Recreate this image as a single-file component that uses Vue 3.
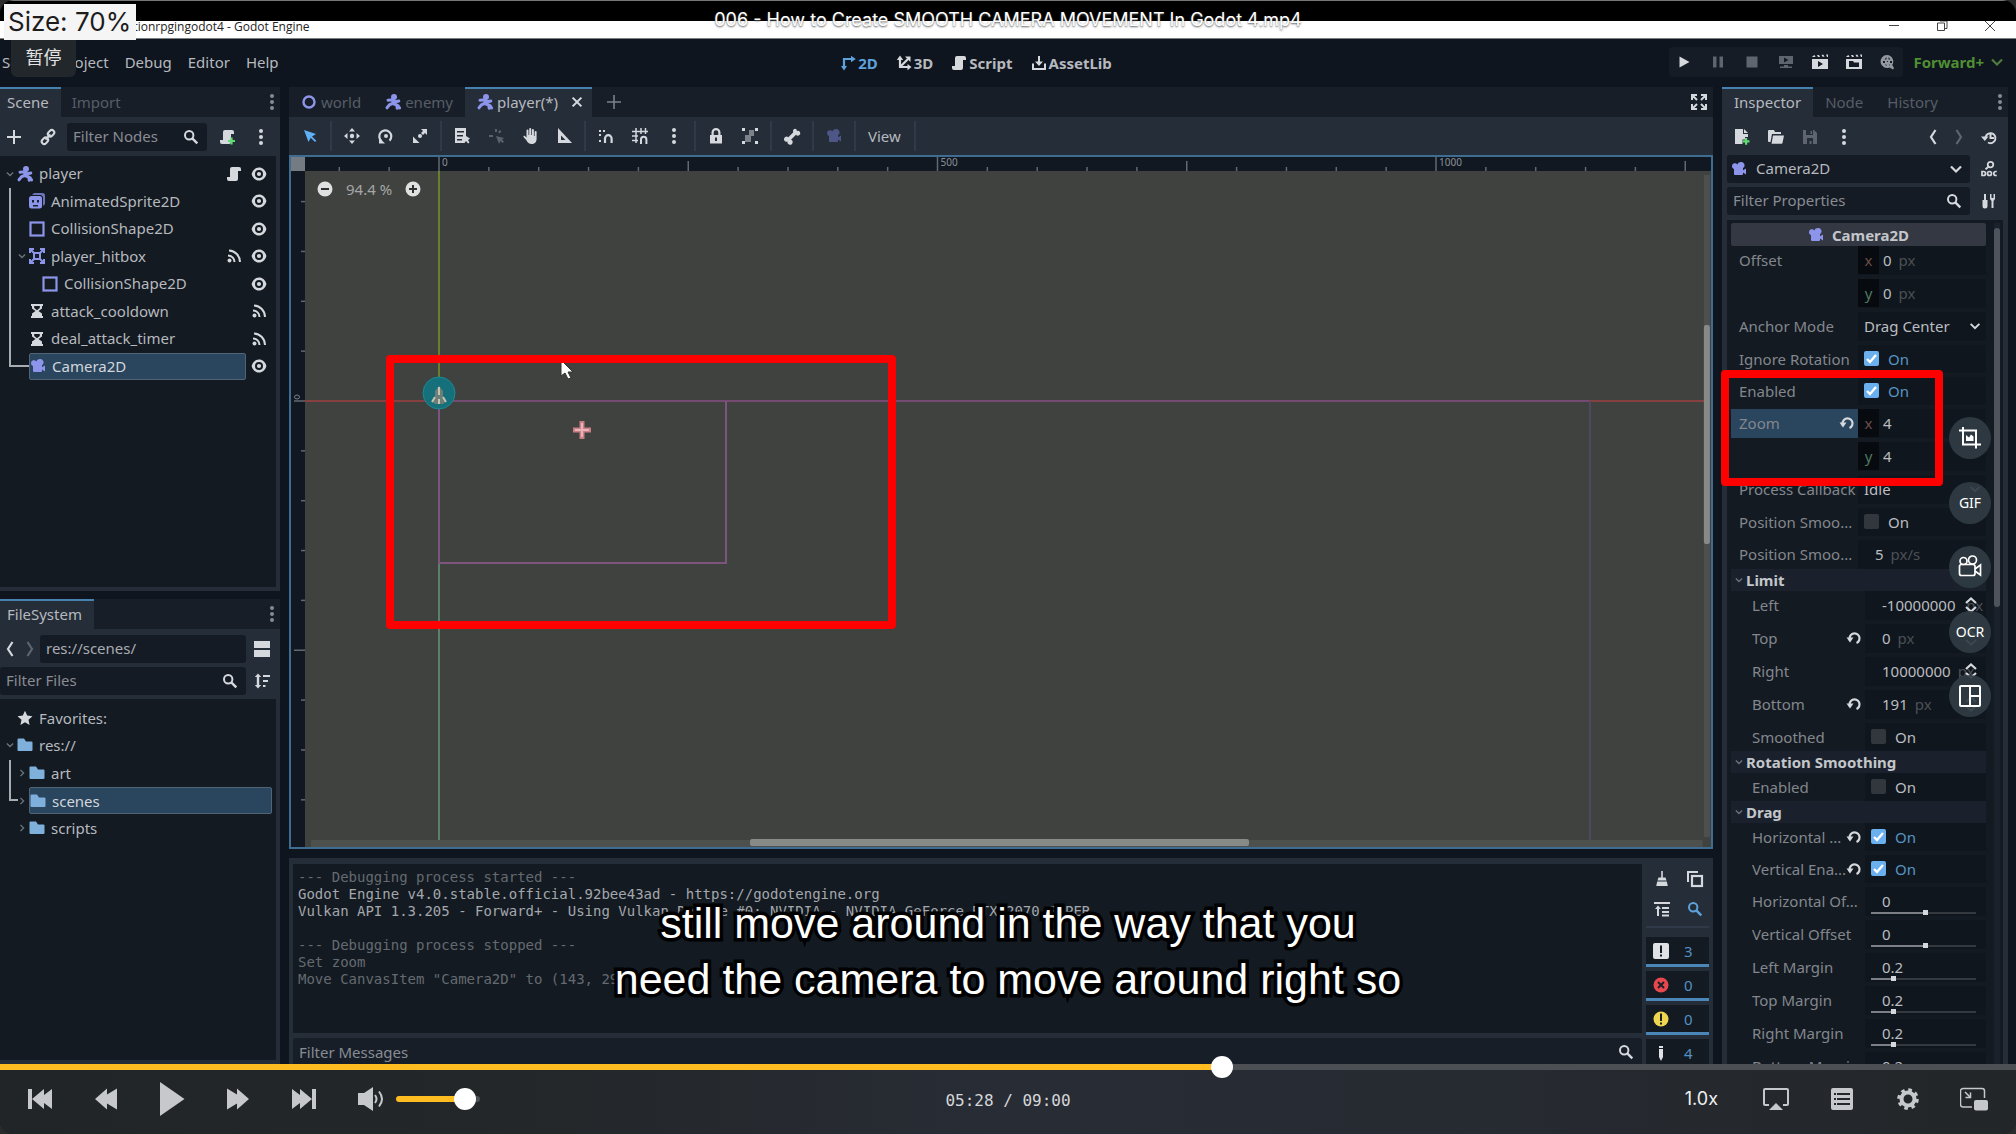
<script setup>
import { ref, computed } from 'vue'

const icons = {
  add: '<path d="M7 1h2v6h6v2H9v6H7V9H1V7h6z" fill="currentColor"/>',
  link: '<g fill="none" stroke="currentColor" stroke-width="2"><rect x="7.6" y="1.8" width="7" height="5" rx="2.5" transform="rotate(-45 11 4.3)"/><rect x="1.4" y="9.2" width="7" height="5" rx="2.5" transform="rotate(-45 5 11.7)"/><path d="M5.5 10.5l5-5"/></g>',
  search: '<circle cx="6.2" cy="6.2" r="4.2" fill="none" stroke="currentColor" stroke-width="2"/><path d="M9.3 9.3l5 5" stroke="currentColor" stroke-width="2.4"/>',
  script: '<path d="M6 1a2 2 0 0 0-2 2v8H1v2a2 2 0 0 0 2 2h7a2 2 0 0 0 2-2V5h3V3a2 2 0 0 0-2-2z" fill="currentColor"/>',
  scriptAdd: '<path d="M6 1a2 2 0 0 0-2 2v8H1v2a2 2 0 0 0 2 2h7a2 2 0 0 0 2-2V5h3V3a2 2 0 0 0-2-2z" fill="currentColor"/><path d="M11.4 8.5h2.2v2.4H16v2.2h-2.4v2.4h-2.2v-2.4H9v-2.2h2.4z" fill="#5fdc72"/>',
  dots: '<g fill="currentColor"><circle cx="8" cy="2" r="2"/><circle cx="8" cy="8" r="2"/><circle cx="8" cy="14" r="2"/></g>',
  down: '<path d="M3 5.5l5 5 5-5" fill="none" stroke="currentColor" stroke-width="2.2"/>',
  right: '<path d="M5.5 3l5 5-5 5" fill="none" stroke="currentColor" stroke-width="2.2"/>',
  back: '<path d="M10.5 1L6 8l4.5 7" fill="none" stroke="currentColor" stroke-width="2.2"/>',
  forward: '<path d="M5.5 1L10 8l-4.5 7" fill="none" stroke="currentColor" stroke-width="2.2"/>',
  body: '<g fill="none" stroke="#8d95ea" stroke-width="3" stroke-linecap="round"><path d="M8.6 5.5L7.5 9.5l-3 1.3-2.5 3M7.8 9.5l4 1.6.4 3.1M3 6.2l5-.4 2.4 2 3.4-.8M13 11.5l1.6 2.5"/></g><circle cx="9" cy="3" r="3" fill="#8d95ea"/>',
  sprite: '<path d="M5 0h8.5A2.5 2.5 0 0 1 16 2.500V11l-2 2V4L12 2H3z" fill="#6a74bd"/><rect x="0" y="3" width="13" height="12.500" rx="2.500" fill="#8d95ea"/><path d="M3 7h2v2.500H3zM8 7h2v2.500H8zM4 12h5v1.500H4z" fill="#18202c"/>',
  shape: '<rect x="1.500" y="1.500" width="13" height="13" fill="none" stroke="#8d95ea" stroke-width="2.200"/>',
  area: '<g fill="none" stroke="#8d95ea" stroke-width="2"><path d="M1 5V1h4M11 1h4v4M15 11v4h-4M5 15H1v-4"/><rect x="5" y="5" width="6" height="6"/><path d="M2 2l3 3M14 2l-3 3M2 14l3-3M14 14l-3-3"/></g>',
  timer: '<path d="M2 1v2h1v2.500L6.500 8 3 10.500V13H2v2h12v-2h-1v-2.500L9.500 8 13 5.500V3h1V1zm3.200 2h5.600v2L8 7.200 5.200 5z" fill="currentColor" fill-rule="evenodd"/>',
  camera: '<path d="M9.500 1a3.300 3.300 0 0 0-3.200 2.500A2.900 2.900 0 0 0 1 5.200c0 1.300.8 2.300 2 2.700V13a1 1 0 0 0 1 1h7a1 1 0 0 0 1-1v-1.500l3 2V7.500l-3 1.800V7A3.300 3.300 0 0 0 9.500 1z" fill="currentColor"/>',
  eye: '<path fill-rule="evenodd" d="M8 1.500C4.400 1.500 1.600 4 .6 8c1 4 3.800 6.500 7.400 6.500s6.400-2.500 7.400-6.500c-1-4-3.800-6.500-7.400-6.500zM8 4a4 4 0 1 1 0 8 4 4 0 0 1 0-8z" fill="currentColor"/><circle cx="8" cy="8" r="2.100" fill="currentColor"/>',
  signal: '<g fill="none" stroke="currentColor" stroke-width="2"><path d="M2 7.500A6.500 6.500 0 0 1 8.500 14M3 2.500A11.500 11.500 0 0 1 14 14"/></g><circle cx="3.500" cy="12.500" r="2" fill="currentColor"/>',
  folder: '<path d="M.5 2.500A1 1 0 0 1 1.500 1.500H7l2 3h5.500a1 1 0 0 1 1 1V13a1 1 0 0 1-1 1h-13a1 1 0 0 1-1-1z" fill="#7fb0db"/>',
  star: '<path d="M8 .8l2.200 4.800 5.300.6-4 3.500 1.100 5.200L8 12.300l-4.600 2.600 1.100-5.200-4-3.500 5.300-.6z" fill="currentColor"/>',
  split: '<path d="M0 0h16v7H0zM0 9h16v7H0z" fill="currentColor"/>',
  sort: '<path d="M4 .5L7.200 4H5.200v8h2L4 15.500.8 12h2V4h-2zM9 2h7v2H9zM9 7h5v2H9zM9 12h2.500v2H9z" fill="currentColor"/>',
  ring: '<circle cx="8" cy="8" r="5.500" fill="none" stroke="#8d95ea" stroke-width="2.400"/>',
  close: '<path d="M3 3l10 10M13 3L3 13" stroke="currentColor" stroke-width="2.400"/>',
  plusThin: '<path d="M8 1v14M1 8h14" stroke="currentColor" stroke-width="1.600"/>',
  expand: '<g fill="none" stroke="currentColor" stroke-width="2"><path d="M1 6V1h5M1 1l5 5M10 1h5v5M15 1l-5 5M1 10v5h5M1 15l5-5M15 10v5h-5M15 15l-5-5"/></g>',
  select: '<path d="M2 2l4.500 12 2.200-4.300L13 14l1.300-1.300L10 8.500 14 6z" fill="#5fb0f5"/>',
  move: '<path d="M8 0l3 3.500H5zM8 16l3-3.500H5zM0 8l3.500-3v6zM16 8l-3.500-3v6z" fill="currentColor"/><circle cx="8" cy="8" r="2.200" fill="currentColor"/>',
  rotate: '<path d="M3.500 13A6 6 0 1 1 11.500 12.600" fill="none" stroke="currentColor" stroke-width="2.200"/><path d="M1 9.500v6h6z" fill="currentColor"/><circle cx="8" cy="8" r="2" fill="currentColor"/>',
  scale: '<path d="M9 1h6v6l-2-2-2 2-2-2 2-2zM1 8.500v6.500h6.500L5.300 12.800 3.200 10.700z" fill="currentColor"/><circle cx="8" cy="8" r="2" fill="currentColor"/>',
  list: '<path fill-rule="evenodd" d="M1 0h11v8l4 2.500-2 1.500 1.500 2.500-1.500 1-2-2.500-1.500 2H1zm2 3v1.500h7V3zm0 4v1.500h6V7zm0 4v1.500h5V11z" fill="currentColor"/>',
  pivot: '<path d="M7 1h2v3H7zM1 7h4v2H1zM12 2l1.500 1.500-2 2L10 4zM8 8l3 8 1.500-3 2 2 1.500-1.500-2-2 2-1.500z" fill="currentColor"/>',
  hand: '<path d="M4.500 2.500a1 1 0 0 1 2 0V7h.7V1a1 1 0 0 1 2 0v6h.7V2a1 1 0 0 1 2 0v6h.7V4a1 1 0 0 1 2 0v7c0 3-2 5-5 5-2.500 0-4-1.500-5-3.500L1.500 9c-.3-1 .9-1.500 1.700-.8l1.300 1.300z" fill="currentColor"/>',
  measure: '<path fill-rule="evenodd" d="M2 0v15h14zm3 7.500l4.500 4.500H5z" fill="currentColor"/>',
  snap: '<path d="M1 2h2v2H1zM5 2h2v2H5zM1 6h2v2H1zM1 12h2v2H1z" fill="currentColor"/><path d="M7 15v-4.500a3.300 3.300 0 0 1 6.600 0V15" fill="none" stroke="currentColor" stroke-width="2.200"/>',
  grid: '<path d="M4 0v15M9 0v6M13.500 0v6M0 3.500h16M0 8h6M0 12.500h6" fill="none" stroke="currentColor" stroke-width="1.500"/><path d="M9 16v-4.500a2.700 2.700 0 0 1 5.400 0V16" fill="none" stroke="currentColor" stroke-width="2"/>',
  lock: '<path fill-rule="evenodd" d="M8 0a4.500 4.500 0 0 0-4.500 4.500V7H2v8.500h12V7h-1.500V4.500A4.500 4.500 0 0 0 8 0zm0 2.200a2.300 2.300 0 0 1 2.300 2.300V7H5.700V4.500A2.300 2.300 0 0 1 8 2.200zM7 9.500h2v3.500H7z" fill="currentColor"/>',
  group: '<path d="M0 0h3v3H0zM13 0h3v3h-3zM0 13h3v3H0zM13 13h3v3h-3z" fill="currentColor"/><path d="M7 2h5v6H9v6H3V7h4z" fill="currentColor" opacity=".5"/>',
  bone: '<path d="M10.800.8a2.300 2.300 0 0 0-1.500 3.500L4.300 9.300a2.600 2.600 0 1 0-.8 4.300A2.600 2.600 0 1 0 7 11.700l5-5A2.400 2.400 0 1 0 13 3 2.300 2.300 0 0 0 10.800.8z" fill="currentColor"/>',
  ws2d: '<path d="M4 14V4h8" fill="none" stroke="currentColor" stroke-width="2.200"/><path d="M1 11h6l-3 4.500zM11 .8L15.800 4 11 7.200z" fill="currentColor"/>',
  ws3d: '<path d="M4 3v9h9M4 12l8-8" fill="none" stroke="currentColor" stroke-width="2.200"/><path d="M.8 5L4 .5 7.200 5zM11.500 9l4 3-4 3.200zM9 1.500h5.500V7z" fill="currentColor"/>',
  asset: '<path d="M7 1h2v5.500h3L8 11 4 6.500h3zM1 8.500h2V13h10V8.500h2V15H1z" fill="currentColor"/>',
  play: '<path d="M3.500 2.500v11l10-5.500z" fill="currentColor"/>',
  pause: '<path d="M3 2.500h3.500v11H3zM9.500 2.500H13v11H9.500z" fill="currentColor"/>',
  stop: '<path d="M2.500 2.500h11v11h-11z" fill="currentColor"/>',
  remote: '<path fill-rule="evenodd" d="M1 2h14v8H1zm5 1.500v5L10.500 6zM6 11h4v1.500h4V14H2v-1.500h4z" fill="currentColor"/>',
  clip: '<path fill-rule="evenodd" d="M0 2.500L2.500 1l1 2H1zM5 1h2l1 2H6zM9.500.8h2l1 2h-2zM14 .5h2V3h-1zM0 5h16v10H0zm6 2v6l5-3z" fill="currentColor"/>',
  clipFolder: '<path fill-rule="evenodd" d="M0 2.500L2.500 1l1 2H1zM5 1h2l1 2H6zM9.500.8h2l1 2h-2zM14 .5h2V3h-1zM0 5h16v10H0zm3 3v5h10V8.500H8L7 7H3z" fill="currentColor"/>',
  movie: '<path fill-rule="evenodd" d="M7 1a6.500 6.500 0 1 0 2.500 12.500l3.500 2 1-1.500-1.800-3A6.500 6.500 0 0 0 7 1zM6.500 3v2.500h-2zm2 0l2 2.500h-2zM3 7h2v2H3zm4 0h1v1H7zm3 0h2v2h-2zM5 10.500h1.500V12zm4 0h1V12z" fill="currentColor"/>',
  fileNew: '<path d="M1 0h8v5h5v3h-3v2.500H8.500V15H1zM10 0l4 4h-4z" fill="currentColor"/><path d="M11 9h2.200v2.300h2.300v2.200h-2.300v2.300H11v-2.300H8.700v-2.200H11z" fill="#5fdc72"/>',
  open: '<path d="M1 1h5l1 2h6v2H4L2.500 13H1a1 1 0 0 1-1-1V2a1 1 0 0 1 1-1zM5 6.500h11L14.500 14a1 1 0 0 1-1 .8h-10z" fill="currentColor"/>',
  save: '<path fill-rule="evenodd" d="M1 1h11l3 3v11H1zm3 0v5h7V1zm1 8v6h2.500v-3h2v3H11V9zM8.500 2H10v3H8.500z" fill="currentColor"/>',
  history: '<path d="M4.500 9.500A5 5 0 1 1 7 13.500M9.500 5v4h3.500" fill="none" stroke="currentColor" stroke-width="2"/><path d="M0 7.500h7.500L3.800 12z" fill="currentColor"/>',
  docs: '<circle cx="9.500" cy="3.600" r="2.800" fill="none" stroke="currentColor" stroke-width="1.800"/><path d="M7.500 5.800L4.500 8.300" stroke="currentColor" stroke-width="2"/><g fill="none" stroke="currentColor" stroke-width="1.700"><path d="M1 10.500h1.500a2 2 0 0 1 0 4H1zM15.800 10.500h-1a2 2 0 0 0 0 4h1"/><circle cx="8.500" cy="12.500" r="2"/></g>',
  tools: '<path d="M3 1h2v6h1.500v6a2.500 2.500 0 0 1-5 0V7H3zM9 1h1.500v4h2V1H14v5l-1.500 2v7h-2V8L9 6z" fill="currentColor"/>',
  revert: '<path d="M4 10.500A5 5 0 1 1 10.500 13" fill="none" stroke="currentColor" stroke-width="2.200"/><path d="M.5 7.500h7L4 12.500z" fill="currentColor"/>',
  updown: '<path d="M3 6l5-4.500L13 6M3 10l5 4.500L13 10" fill="none" stroke="currentColor" stroke-width="2.200"/>',
  broom: '<path d="M7.200 0h1.600v6.500h2.700l1 3h-9l1-3h2.700zM3.200 10.500h9.600l1 4.500H2.200z" fill="currentColor"/>',
  copy: '<path d="M1 11V1h10" fill="none" stroke="currentColor" stroke-width="2"/><rect x="5" y="5" width="10" height="10" fill="none" stroke="currentColor" stroke-width="2.200"/>',
  collapse: '<path d="M0 1h16v2H0zM8 6h7v2H8zM8 10h7v2H8zM8 13.500h7v2H8zM4 4.500L7 8H5v7H3V8H1z" fill="currentColor"/>',
  msg: '<path fill-rule="evenodd" d="M2 0h12a2 2 0 0 1 2 2v12a2 2 0 0 1-2 2H2a2 2 0 0 1-2-2V2a2 2 0 0 1 2-2zm5 2.500v7.500h2V2.500zM7 11.500v2h2v-2z" fill="#dfe1e4"/>',
  err: '<circle cx="8" cy="8" r="7.500" fill="#e8484d"/><path d="M5 5l6 6M11 5l-6 6" stroke="#1a1f28" stroke-width="2"/>',
  warn: '<circle cx="8" cy="8" r="7.500" fill="#f0d54f"/><path d="M7 2.500h2V10H7zM7 11.500h2v2H7z" fill="#1a1f28"/>',
  edit: '<path d="M6 1h4v2H6zM6 4h4v8l-2 4-2-4z" fill="#dfe1e4"/>',
}

const mainMenu = ['Scene', 'Project', 'Debug', 'Editor', 'Help']
const workspaces = [
  { name: '2D', icon: 'ws2d', on: true },
  { name: '3D', icon: 'ws3d' },
  { name: 'Script', icon: 'script' },
  { name: 'AssetLib', icon: 'asset' },
]
const runTools = [
  { icon: 'play', name: 'Play' }, { icon: 'pause', name: 'Pause', dim: true }, { icon: 'stop', name: 'Stop', dim: true },
  { icon: 'remote', name: 'Remote', dim: true }, { icon: 'clip', name: 'Play scene' },
  { icon: 'clipFolder', name: 'Play custom scene' }, { icon: 'movie', name: 'Movie maker', mid: true },
]
const nodes = [
  { name: 'player', icon: 'body', depth: 0, open: true, extra: 'script', end: 'eye' },
  { name: 'AnimatedSprite2D', icon: 'sprite', depth: 1, end: 'eye' },
  { name: 'CollisionShape2D', icon: 'shape', depth: 1, end: 'eye' },
  { name: 'player_hitbox', icon: 'area', depth: 1, open: true, extra: 'signal', end: 'eye' },
  { name: 'CollisionShape2D', icon: 'shape', depth: 2, end: 'eye' },
  { name: 'attack_cooldown', icon: 'timer', depth: 1, end: 'signal' },
  { name: 'deal_attack_timer', icon: 'timer', depth: 1, end: 'signal' },
  { name: 'Camera2D', icon: 'camera', depth: 1, end: 'eye', on: true },
]
const files = [
  { name: 'Favorites:', icon: 'star', depth: 0 },
  { name: 'res://', icon: 'folder', depth: 0, arrow: 'down' },
  { name: 'art', icon: 'folder', depth: 1, arrow: 'right' },
  { name: 'scenes', icon: 'folder', depth: 1, arrow: 'right', on: true },
  { name: 'scripts', icon: 'folder', depth: 1, arrow: 'right' },
]
const canvasTools = [
  ['select'], ['move', 'rotate', 'scale'], ['list', 'pivot', 'hand', 'measure'],
  ['snap', 'grid', 'dots'], ['lock', 'group'], ['bone'], ['camera'],
]
const log = [
  { text: '--- Debugging process started ---', cls: 'faint' },
  { text: 'Godot Engine v4.0.stable.official.92bee43ad - https://godotengine.org', cls: 'bright' },
  { text: 'Vulkan API 1.3.205 - Forward+ - Using Vulkan Device #0: NVIDIA - NVIDIA GeForce RTX 2070 SUPER', cls: 'bright' },
  { text: '\u00a0', cls: 'faint' },
  { text: '--- Debugging process stopped ---', cls: 'faint' },
  { text: 'Set zoom', cls: 'faint' },
  { text: 'Move CanvasItem "Camera2D" to (143, 29)', cls: 'faint' },
]
const counters = [
  { icon: 'msg', n: 3 }, { icon: 'err', n: 0 }, { icon: 'warn', n: 0 }, { icon: 'edit', n: 4 },
]
const sections = [
  { rows: [
    { label: 'Offset', kind: 'vec', axis: 'x', value: '0', unit: 'px' },
    { label: '', kind: 'vec', axis: 'y', value: '0', unit: 'px' },
    { label: 'Anchor Mode', kind: 'select', value: 'Drag Center' },
    { label: 'Ignore Rotation', kind: 'check', value: true },
    { label: 'Enabled', kind: 'check', value: true },
    { label: 'Zoom', kind: 'vec', axis: 'x', value: '4', revert: true, on: true },
    { label: '', kind: 'vec', axis: 'y', value: '4' },
    { label: 'Process Callback', kind: 'select', value: 'Idle' },
    { label: 'Position Smoo...', kind: 'check', value: false },
    { label: 'Position Smoo...', kind: 'num', value: '5', unit: 'px/s' },
  ] },
  { title: 'Limit', rows: [
    { label: 'Left', kind: 'num', value: '-10000000', unit: 'px', spin: true },
    { label: 'Top', kind: 'num', value: '0', unit: 'px', spin: true, revert: true },
    { label: 'Right', kind: 'num', value: '10000000', unit: 'px', spin: true },
    { label: 'Bottom', kind: 'num', value: '191', unit: 'px', spin: true, revert: true },
    { label: 'Smoothed', kind: 'check', value: false },
  ] },
  { title: 'Rotation Smoothing', rows: [{ label: 'Enabled', kind: 'check', value: false }] },
  { title: 'Drag', rows: [
    { label: 'Horizontal ...', kind: 'check', value: true, revert: true },
    { label: 'Vertical Ena...', kind: 'check', value: true, revert: true },
    { label: 'Horizontal Of...', kind: 'slide', value: '0', pos: 52 },
    { label: 'Vertical Offset', kind: 'slide', value: '0', pos: 52 },
    { label: 'Left Margin', kind: 'slide', value: '0.2', pos: 20 },
    { label: 'Top Margin', kind: 'slide', value: '0.2', pos: 20 },
    { label: 'Right Margin', kind: 'slide', value: '0.2', pos: 20 },
    { label: 'Bottom Margin', kind: 'slide', value: '0.2', pos: 20 },
  ] },
]

const STEP = 49.85
const xTicks = Array.from({ length: 28 }, (_, k) => k - 2).map(i => ({
  at: i * STEP, len: i % 10 === 0 ? 14 : i % 5 === 0 ? 10 : 4, label: i % 10 === 0 ? String(i * 50) : '',
}))
const yTicks = Array.from({ length: 13 }, (_, k) => k - 4).map(i => ({ at: i * STEP, len: i % 5 === 0 ? 11 : 4 }))

const time = ref(328)
const volume = ref(94)
const played = computed(() => (time.value / 540) * 100)
</script>

<template>
  <main class="player">
    <section class="stage">
      <div class="letterbox"></div>
      <header class="titlebar">
        <span class="wintitle">actionrpgingodot4 - Godot Engine</span>
        <span class="wincontrols">
          <svg viewBox="0 0 12 12"><path d="M1 4.500h10" /></svg>
          <svg viewBox="0 0 12 12"><path d="M1.500 2h7v7.500h-7zM4 0h7v7.500H8.500" /></svg>
          <svg viewBox="0 0 12 12"><path d="M1 0l10 10M11 0L1 10" /></svg>
        </span>
      </header>

      <div class="editor">
        <nav class="menubar">
          <div class="menus"><button v-for="m in mainMenu" :key="m">{{ m }}</button></div>
          <div class="spaces">
            <button v-for="w in workspaces" :key="w.name" :class="{ on: w.on }">
              <svg class="ic" viewBox="0 0 16 16" v-html="icons[w.icon]"></svg>{{ w.name }}
            </button>
          </div>
          <div class="run">
            <div class="runbox">
              <button v-for="r in runTools" :key="r.name" :class="{ dim: r.dim, mid: r.mid }" :aria-label="r.name">
                <svg class="ic" viewBox="0 0 16 16" v-html="icons[r.icon]"></svg>
              </button>
            </div>
            <button class="renderer">Forward+ <svg class="ic" viewBox="0 0 16 16" v-html="icons.down"></svg></button>
          </div>
        </nav>

        <div class="docks">
          <aside class="left">
            <section class="dock scene">
              <div class="tabs">
                <button class="tab on">Scene</button><button class="tab">Import</button>
                <button class="more" aria-label="Dock options"><svg class="ic" viewBox="0 0 16 16" v-html="icons.dots"></svg></button>
              </div>
              <div class="bar scenebar">
                <button aria-label="Add node"><svg class="ic" viewBox="0 0 16 16" v-html="icons.add"></svg></button>
                <button aria-label="Instance scene"><svg class="ic" viewBox="0 0 16 16" v-html="icons.link"></svg></button>
                <label class="field"><input placeholder="Filter Nodes" aria-label="Filter Nodes"><svg class="ic" viewBox="0 0 16 16" v-html="icons.search"></svg></label>
                <button aria-label="Attach script"><svg class="ic" viewBox="0 0 16 16" v-html="icons.scriptAdd"></svg></button>
                <button aria-label="More"><svg class="ic" viewBox="0 0 16 16" v-html="icons.dots"></svg></button>
              </div>
              <div class="inner">
                <ul class="tree nodes">
                  <li v-for="(n, i) in nodes" :key="i">
                    <span class="item" :class="['d' + n.depth, { on: n.on }]">
                      <svg class="arrow" viewBox="0 0 16 16" v-html="n.open ? icons.down : ''"></svg>
                      <svg class="ic" :class="{ cam: n.icon === 'camera' }" viewBox="0 0 16 16" v-html="icons[n.icon]"></svg>
                      <span class="name">{{ n.name }}</span>
                      <svg v-if="n.extra" class="ic" viewBox="0 0 16 16" v-html="icons[n.extra]"></svg>
                    </span>
                    <svg class="ic end" viewBox="0 0 16 16" v-html="icons[n.end]"></svg>
                  </li>
                </ul>
              </div>
            </section>

            <section class="dock files">
              <div class="tabs">
                <button class="tab on">FileSystem</button>
                <button class="more" aria-label="Dock options"><svg class="ic" viewBox="0 0 16 16" v-html="icons.dots"></svg></button>
              </div>
              <div class="filebars">
                <div class="bar pathbar">
                  <button aria-label="Back"><svg class="ic" viewBox="0 0 16 16" v-html="icons.back"></svg></button>
                  <button class="dim" aria-label="Forward"><svg class="ic" viewBox="0 0 16 16" v-html="icons.forward"></svg></button>
                  <label class="field"><input class="solid" value="res://scenes/" aria-label="Path"></label>
                  <button class="side" aria-label="Split mode"><svg class="ic" viewBox="0 0 16 16" v-html="icons.split"></svg></button>
                </div>
                <div class="bar pathbar">
                  <label class="field flush"><input placeholder="Filter Files" aria-label="Filter Files"><svg class="ic" viewBox="0 0 16 16" v-html="icons.search"></svg></label>
                  <button class="side" aria-label="Sort"><svg class="ic" viewBox="0 0 16 16" v-html="icons.sort"></svg></button>
                </div>
              </div>
              <div class="inner">
                <ul class="tree paths">
                  <li v-for="f in files" :key="f.name">
                    <span class="item" :class="['d' + f.depth, { on: f.on }]">
                      <svg class="arrow" viewBox="0 0 16 16" v-html="f.arrow ? icons[f.arrow] : ''"></svg>
                      <svg class="ic" viewBox="0 0 16 16" v-html="icons[f.icon]"></svg>
                      <span class="name">{{ f.name }}</span>
                    </span>
                  </li>
                </ul>
              </div>
            </section>
          </aside>

          <section class="center">
            <div class="tabs">
              <button class="tab file"><svg class="ic" viewBox="0 0 16 16" v-html="icons.ring"></svg>world</button>
              <button class="tab file"><svg class="ic" viewBox="0 0 16 16" v-html="icons.body"></svg>enemy</button>
              <button class="tab file on"><svg class="ic" viewBox="0 0 16 16" v-html="icons.body"></svg>player(*)<svg class="ic x" viewBox="0 0 16 16" v-html="icons.close"></svg></button>
              <button class="newtab" aria-label="New scene"><svg class="ic" viewBox="0 0 16 16" v-html="icons.plusThin"></svg></button>
              <button class="more wide" aria-label="Distraction free"><svg class="ic" viewBox="0 0 16 16" v-html="icons.expand"></svg></button>
            </div>
            <div class="bar canvasbar">
              <template v-for="(g, gi) in canvasTools" :key="gi">
                <button v-for="t in g" :key="t" :class="t" :aria-label="t"><svg class="ic" viewBox="0 0 16 16" v-html="icons[t]"></svg></button>
                <i class="sep"></i>
              </template>
              <button class="view">View</button><i class="sep"></i>
            </div>
            <div class="viewport">
              <svg class="canvas">
                <rect x="14" y="14" width="100%" height="100%" fill="#3f423e" />
                <g transform="translate(148 244)">
                  <path d="M0-244V10" stroke="#697f2e" stroke-width="2" />
                  <path d="M0 10V460" stroke="#5c8068" stroke-width="2" />
                  <path d="M-134 0H0M1151 0H1268" stroke="#85403f" stroke-width="2" />
                  <path d="M0 0H1151" stroke="#744a72" stroke-width="2" />
                  <path d="M1151 0V460" stroke="#504862" stroke-width="2" />
                  <path d="M0 0V162H287V0" fill="none" stroke="#7d547d" stroke-width="2" />
                  <circle cy="-8" r="16" fill="#16707b" stroke="#198b96" stroke-width="1" />
                  <path d="M0-15l4 5v6l3 4-3 3H-4l-3-3 3-4v-6z" fill="#6b7f78" />
                  <path d="M0-14v8M-4-4l-3 5M4-4l3 5M0-2v5" stroke="#c3c4b2" stroke-width="2" />
                  <path d="M143 20v18M134 29h18" stroke="#c97f88" stroke-width="5" />
                  <path d="M143 22v14M136 29h14" stroke="#eab3b6" stroke-width="2" />
                  <path d="M122-41v16l4-3 3 6 3-1-3-6h5z" fill="#fff" stroke="#333" stroke-width="1" />
                </g>
                <rect width="100%" height="14" fill="#111822" />
                <rect width="14" height="100%" fill="#111822" />
                <rect width="14" height="14" fill="#757b82" />
                <g stroke="#636870" stroke-width="1.500">
                  <path v-for="t in xTicks" :key="'x' + t.at" :d="`M${148 + t.at} 14v${-t.len}`" />
                  <path v-for="t in yTicks" :key="'y' + t.at" :d="`M14 ${244 + t.at}h${-t.len}`" />
                </g>
                <g fill="#8b9097" font-size="10">
                  <text v-for="t in xTicks" :key="'l' + t.at" :x="151 + t.at" y="9">{{ t.label }}</text>
                </g>
                <ellipse cx="6" cy="240" rx="2.500" ry="2" fill="none" stroke="#7b8087" />
                <rect x="20" y="683" width="98%" height="7" fill="#4d504c" />
                <rect x="459" y="682" width="499" height="7" rx="2" fill="#878a86" />
                <rect x="99.5%" y="18" width="6" height="662" fill="#4d504c" />
                <rect x="99.5%" y="168" width="6" height="219" rx="2" fill="#878a86" />
              </svg>
              <div class="zoomer">
                <button aria-label="Zoom out"><svg viewBox="0 0 16 16"><circle cx="8" cy="8" r="7.500" fill="#dfe0e0" /><path d="M4 8h8" stroke="#2e312f" stroke-width="2" /></svg></button>
                <span>94.4 %</span>
                <button aria-label="Zoom in"><svg viewBox="0 0 16 16"><circle cx="8" cy="8" r="7.500" fill="#dfe0e0" /><path d="M4 8h8M8 4v8" stroke="#2e312f" stroke-width="2" /></svg></button>
              </div>
            </div>
            <div class="output">
              <div class="logcol">
                <div class="log"><p v-for="(l, i) in log" :key="i" :class="l.cls">{{ l.text }}</p></div>
                <label class="field msgs"><input placeholder="Filter Messages" aria-label="Filter Messages"><svg class="ic" viewBox="0 0 16 16" v-html="icons.search"></svg></label>
              </div>
              <div class="logtools">
                <div class="quad">
                  <button v-for="t in ['broom', 'copy', 'collapse', 'search']" :key="t" :class="t" :aria-label="t"><svg class="ic" viewBox="0 0 16 16" v-html="icons[t]"></svg></button>
                </div>
                <button v-for="c in counters" :key="c.icon" class="counter"><svg class="ic" viewBox="0 0 16 16" v-html="icons[c.icon]"></svg>{{ c.n }}</button>
              </div>
            </div>
          </section>

          <aside class="dock inspector">
            <div class="tabs">
              <button class="tab on">Inspector</button><button class="tab">Node</button><button class="tab">History</button>
              <button class="more" aria-label="Dock options"><svg class="ic" viewBox="0 0 16 16" v-html="icons.dots"></svg></button>
            </div>
            <div class="bar inspbar">
              <button aria-label="New"><svg class="ic" viewBox="0 0 16 16" v-html="icons.fileNew"></svg></button>
              <button aria-label="Open"><svg class="ic" viewBox="0 0 16 16" v-html="icons.open"></svg></button>
              <button class="dim" aria-label="Save"><svg class="ic" viewBox="0 0 16 16" v-html="icons.save"></svg></button>
              <button aria-label="More"><svg class="ic" viewBox="0 0 16 16" v-html="icons.dots"></svg></button>
              <span class="grow"></span>
              <button class="slim" aria-label="Previous"><svg class="ic" viewBox="0 0 16 16" v-html="icons.back"></svg></button>
              <button class="slim dim" aria-label="Next"><svg class="ic" viewBox="0 0 16 16" v-html="icons.forward"></svg></button>
              <button aria-label="History"><svg class="ic" viewBox="0 0 16 16" v-html="icons.history"></svg></button>
            </div>
            <div class="picks">
              <label class="field object"><svg class="ic cam" viewBox="0 0 16 16" v-html="icons.camera"></svg><select aria-label="Object"><option>Camera2D</option></select><svg class="ic" viewBox="0 0 16 16" v-html="icons.down"></svg></label>
              <button aria-label="Open docs"><svg class="ic" viewBox="0 0 16 16" v-html="icons.docs"></svg></button>
              <label class="field"><input placeholder="Filter Properties" aria-label="Filter Properties"><svg class="ic" viewBox="0 0 16 16" v-html="icons.search"></svg></label>
              <button aria-label="Property tools"><svg class="ic" viewBox="0 0 16 16" v-html="icons.tools"></svg></button>
            </div>
            <div class="props">
              <div class="proplist">
                <h2 class="category"><svg class="ic cam" viewBox="0 0 16 16" v-html="icons.camera"></svg>Camera2D</h2>
                <template v-for="(s, si) in sections" :key="si">
                  <h3 v-if="s.title"><svg class="arrow" viewBox="0 0 16 16" v-html="icons.down"></svg>{{ s.title }}</h3>
                  <div class="rows" :class="{ nested: s.title }">
                    <div v-for="(r, ri) in s.rows" :key="ri" class="prop" :class="[r.kind, { on: r.on }]">
                      <label class="plabel" :for="`p${si}-${ri}`"><span>{{ r.label }}</span><svg v-if="r.revert" class="ic" viewBox="0 0 16 16" v-html="icons.revert"></svg></label>
                      <div class="pfield">
                        <template v-if="r.kind === 'check'">
                          <input :id="`p${si}-${ri}`" type="checkbox" :checked="r.value"><span class="state">On</span>
                        </template>
                        <template v-else-if="r.kind === 'select'">
                          <select :id="`p${si}-${ri}`"><option>{{ r.value }}</option></select><svg class="ic chev" viewBox="0 0 16 16" v-html="icons.down"></svg>
                        </template>
                        <template v-else>
                          <b v-if="r.axis" :class="r.axis">{{ r.axis }}</b>
                          <input :id="`p${si}-${ri}`" class="val" :value="r.value" :style="{ width: r.value.length + 'ch' }">
                          <span v-if="r.unit" class="unit">{{ r.unit }}</span>
                          <svg v-if="r.spin" class="ic spin" viewBox="0 0 16 16" v-html="icons.updown"></svg>
                          <input v-if="r.kind === 'slide'" class="slider" type="range" :value="r.pos" :aria-label="r.label" :style="{ '--p': r.pos + '%' }">
                        </template>
                      </div>
                    </div>
                  </div>
                </template>
              </div>
              <div class="scroll"><i></i></div>
            </div>
          </aside>
        </div>
      </div>

      <h1 class="videotitle">006 - How to Create SMOOTH CAMERA MOVEMENT In Godot 4.mp4</h1>
      <div class="mark canvasmark"></div>
      <div class="mark zoommark"></div>
      <div class="sizebadge">Size: 70%</div>
      <div class="tip">暂停</div>
      <div class="shots">
        <button aria-label="Screenshot"><svg viewBox="0 0 24 24" fill="none" stroke="#fff" stroke-width="2"><path d="M1 4.500h17v18M5 1v17.500h18" /><path d="M8 15V9l3 2.500L13 8.500l2.500 2V15z" fill="#fff" stroke="none" /></svg></button>
        <button>GIF</button>
        <button aria-label="Record"><svg viewBox="0 0 24 24" fill="none" stroke="#fff" stroke-width="1.700"><circle cx="5.500" cy="6" r="3.500" /><circle cx="14.500" cy="5" r="4" /><rect x="1.500" y="9.500" width="15.500" height="11" rx="2" /><path d="M17 14l5.500-4v10L17 16" /></svg></button>
        <button>OCR</button>
        <button aria-label="Layout"><svg viewBox="0 0 24 24" fill="none" stroke="#fff" stroke-width="2"><rect x="2" y="2" width="20" height="20" rx="1" /><path d="M12 2v20M12 12h10" /></svg></button>
      </div>
      <p class="subtitle">still move around in the way that you<br>need the camera to move around right so</p>
    </section>

    <footer class="controls">
      <input class="seek" type="range" min="0" max="540" v-model="time" aria-label="Seek" :style="{ '--p': played + '%' }">
      <div class="row">
        <div class="transport">
          <button aria-label="Previous"><svg viewBox="0 0 26 34"><path d="M1 7h4v20H1zM5 17L17 7v6l8-6v20l-8-6v6z" /></svg></button>
          <button aria-label="Rewind"><svg viewBox="0 0 26 34"><path d="M2 17L14 6.500v6l10-6v21l-10-6v6z" /></svg></button>
          <button aria-label="Play"><svg viewBox="0 0 26 34"><path d="M1 0l24.500 17L1 34z" /></svg></button>
          <button aria-label="Fast forward"><svg viewBox="0 0 26 34"><path d="M24 17L12 6.500v6l-10-6v21l10-6v6z" /></svg></button>
          <button aria-label="Next"><svg viewBox="0 0 26 34"><path d="M25 7h-4v20h4zM21 17L9 7v6L1 7v20l8-6v6z" /></svg></button>
        </div>
        <button class="mute" aria-label="Mute"><svg viewBox="0 0 26 26"><path d="M0 7h6l9-6v24l-9-6H0z" /><path d="M17 9q3 4 0 8M21 5.500q6 7.500 0 15" fill="none" stroke="#c6c8cc" stroke-width="2" /></svg></button>
        <input class="volume" type="range" min="0" max="100" v-model="volume" aria-label="Volume">
        <div class="time">05:28 / 09:00</div>
        <div class="extras">
          <button class="rate">1.0x</button>
          <button aria-label="AirPlay"><svg viewBox="0 0 28 24"><path d="M7 18H3a1 1 0 0 1-1-1V3a1 1 0 0 1 1-1h22a1 1 0 0 1 1 1v14a1 1 0 0 1-1 1h-4" fill="none" stroke="#c6c8cc" stroke-width="2" /><path d="M14 16l7 7H7z" /></svg></button>
          <button aria-label="Playlist"><svg viewBox="0 0 28 24"><path fill-rule="evenodd" d="M5 1h18a2 2 0 0 1 2 2v18a2 2 0 0 1-2 2H5a2 2 0 0 1-2-2V3a2 2 0 0 1 2-2zm1 5v2h2V6zm3 0v2h13V6zm-3 5v2h2v-2zm3 0v2h13v-2zm-3 5v2h2v-2zm3 0v2h13v-2z" /></svg></button>
          <button aria-label="Settings"><svg viewBox="0 0 28 24"><circle cx="14" cy="12" r="6.500" fill="none" stroke="#c6c8cc" stroke-width="4" /><circle cx="14" cy="12" r="9.300" fill="none" stroke="#c6c8cc" stroke-width="3" stroke-dasharray="3.650 3.650" /></svg></button>
          <button aria-label="Picture in picture"><svg viewBox="0 0 28 24"><path d="M12 20H3a2.500 2.500 0 0 1-2.500-2.500V4A2.500 2.500 0 0 1 3 1.500h19A2.500 2.500 0 0 1 24.500 4v7M5 5l5 5M10.500 5.500v5h-5" fill="none" stroke="#c6c8cc" stroke-width="1.500" /><rect x="14" y="13" width="14" height="10.500" rx="2" /></svg></button>
        </div>
      </div>
    </footer>
  </main>
</template>

<style>
body { margin: 0; background: #2b2b2c; }
</style>

<style scoped>
* { box-sizing: border-box; }
.player { height: 100vh; display: flex; flex-direction: column; border-radius: 14px; overflow: hidden; font: 15px/20px "Noto Sans", sans-serif; color: #b6b9be; background: #0f151e; }
button { font: inherit; color: inherit; background: none; border: 0; padding: 0; margin: 0; display: flex; align-items: center; justify-content: center; }
input, select { font: inherit; color: inherit; background: none; border: 0; padding: 0; margin: 0; min-width: 0; outline: 0; appearance: none; }
h1, h2, h3, p, ul { margin: 0; padding: 0; list-style: none; font-size: inherit; }
.ic { width: 16px; height: 16px; flex: none; display: block; color: #d5d8dc; overflow: visible; }
.cam { color: #8d95ea; }
.arrow { width: 10px; height: 10px; flex: none; color: #6c727b; }
.dim .ic { color: #5f656e; }
.stage { position: relative; flex: 1; min-height: 0; overflow: hidden; display: flex; flex-direction: column; }
.letterbox { height: 21px; flex: none; background: #000; border-top: 1px solid #777; }
.titlebar { height: 18px; flex: none; background: #fff; border-bottom: 1px solid #7e8280; display: flex; justify-content: space-between; padding: 0 20px 0 121px; font: 12px/12px "Open Sans", sans-serif; color: #222; }
.wincontrols { display: flex; gap: 36px; }
.wincontrols svg { width: 12px; height: 12px; fill: none; stroke: #444; stroke-width: 1; }
.editor { flex: 1; min-height: 0; display: flex; flex-direction: column; }
.menubar { height: 48px; flex: none; display: grid; grid-template-columns: 1fr auto 1fr; align-items: center; }
.menus { display: flex; gap: 16px; padding: 0 0 2px 2px; }
.spaces { display: flex; gap: 18px; font-weight: 700; padding-right: 64px; }
.spaces button { gap: 2px; }
.spaces .on, .spaces .on .ic { color: #5da2dc; }
.run { display: flex; justify-content: flex-end; align-items: center; padding: 0 11px 2px 0; gap: 10px; }
.runbox { display: flex; gap: 4px; background: #151c26; height: 30px; border-radius: 4px; }
.runbox button { width: 30px; }
.mid .ic { color: #9499a0; }
.renderer { color: #4f8f33; font-weight: 700; gap: 5px; }
.renderer .ic { color: #4f7a40; }

.docks { flex: 1; min-height: 0; display: flex; gap: 9px; padding-right: 8px; }
.left { width: 280px; flex: none; display: flex; flex-direction: column; gap: 8px; }
.dock { background: #252d39; display: flex; flex-direction: column; min-height: 0; }
.scene { flex: 1; }
.files { height: 465px; flex: none; }
.tabs { height: 30px; flex: none; display: flex; background: #171e28; }
.tab { padding: 0 12px 2px; color: #575d66; border-top: 2px solid transparent; }
.left .tab { padding-left: 11px; }
.left .tab.on { padding-left: 7px; }
.tab.on { background: #252d39; border-top-color: #4682b0; color: #b6b9be; }
.more { margin-left: auto; width: 16px; }
.more .ic { color: #878b92; }
.wide .ic { color: #d5d8dc; }
.wide { margin-right: 6px; }
.bar { display: flex; align-items: center; }
.scenebar { height: 38px; padding: 2px 11px 0 6px; gap: 18px; }
.scenebar .field { flex: 1; margin: 0 -6px 0 -7px; }
.field { height: 28px; background: #151b25; border-radius: 3px; display: flex; align-items: center; padding: 0 8px 0 6px; min-width: 0; }
.field input, .field select { flex: 1; width: 0; padding-bottom: 2px; }
.field input::placeholder { color: #888c92; opacity: 1; }
.inner { flex: 1; min-height: 0; background: #131a22; margin: 1px 4px 4px 0; }
.scenebar button, .inspbar button { width: 16px; }
.tree { display: grid; grid-auto-rows: 1fr; position: relative; }
.nodes { height: 220px; margin-top: 4px; }
.nodes .name { padding-bottom: 1px; }
.paths { height: 138px; margin-top: 5px; }
.tree li { display: flex; align-items: stretch; padding: 0 4px 0 4px; }
.item { flex: 1; display: flex; align-items: center; gap: 2px; position: relative; border: 1px solid transparent; border-radius: 2px; }
.tree .name { flex: 1; margin-left: 4px; }
.nodes .item { margin-right: 5px; padding-right: 3px; }
.nodes .end { align-self: center; margin-right: 5px; }
.d1 { margin-left: 12px; }
.d2 { margin-left: 25px; }
.item.on { margin-left: 25px; background: #2a455e; border-color: #506478; color: #d3d6da; }
.item.on .arrow { position: absolute; left: -13px; }
.tree::before { content: ""; position: absolute; left: 9px; border: solid #a9acb1; border-width: 0 0 2px 2px; }
.nodes::before { top: 28px; bottom: 13px; width: 19px; }
.paths::before { top: 56px; bottom: 41px; width: 7px; }
.filebars { display: flex; flex-direction: column; gap: 4px; padding: 6px 10px 3px 0; }
.pathbar .field { flex: 1; }
.pathbar button { width: 20px; }
.pathbar .side { width: 17px; margin-left: 7px; }
.solid { color: #a9acb1; }

.center { flex: 1; min-width: 0; display: flex; flex-direction: column; }
.tab.file { gap: 4px; padding: 0 12px 2px; }
.file .x { width: 14px; height: 14px; margin-left: 8px; margin-right: -4px; }
.newtab { margin-left: 14px; }
.newtab .ic { color: #7c8188; }
.canvasbar { height: 38px; flex: none; background: #252d39; gap: 4px; padding-left: 6px; }
.canvasbar button { width: 30px; height: 30px; }
.canvasbar .view { width: auto; padding: 0 8px 1px 7px; }
.sep { width: 2px; margin: 0 1px; height: 30px; background: #303947; }
.pivot .ic { color: #5b626c; }
.canvasbar .camera .ic { color: #4e5587; }
.viewport { flex: 1; min-height: 0; border: 2px solid #3f6d92; position: relative; overflow: hidden; }
.canvas { position: absolute; width: 100%; height: 100%; }
.zoomer { position: absolute; left: 26px; top: 22px; display: flex; align-items: center; gap: 13px; color: #a5a7a6; }
.zoomer svg { width: 16px; height: 16px; display: block; }
.output { height: 206px; margin-top: 9px; flex: none; background: #252d39; display: flex; padding: 6px 4px 0; gap: 4px; }
.logcol { flex: 1; min-width: 0; display: flex; flex-direction: column; gap: 5px; }
.log { height: 169px; flex: none; background: #131a22; padding: 5px; font: 14px/17px "DejaVu Sans Mono", monospace; overflow: hidden; white-space: pre; }
.faint { color: #656a70; }
.bright { color: #a4a7ab; }
.msgs { background: #171e28; flex: none; }
.msgs input { padding: 0; }
.logtools { width: 63px; display: flex; flex-direction: column; gap: 4px; }
.quad { display: grid; grid-template-columns: 1fr 1fr; grid-template-rows: 30px 30px; border-bottom: 2px solid #303947; padding-bottom: 2px; margin-bottom: 5px; }
.logtools .search .ic { color: #5da2dc; }
.quad .copy, .quad .search { padding-left: 3px; }
.counter { height: 30px; flex: none; background: #131a22; border-bottom: 3px solid #4a86b8; justify-content: flex-start; padding-left: 7px; gap: 15px; color: #5490c2; }

.inspector { width: 286px; flex: none; }
.inspbar { height: 38px; flex: none; padding: 2px 11px 0 12px; gap: 18px; }
.grow { flex: 1; }
.inspbar .slim { width: 8px; }
.picks { display: grid; grid-template-columns: 1fr 29px; gap: 4px 4px; padding: 0 5px; }
.object { padding: 0 6px 0 4px; }
.picks .cam { margin-right: 9px; }
.props { flex: 1; min-height: 0; margin: 5px 5px 0; background: #131a22; display: flex; padding: 3px 3px 0 4px; gap: 8px; overflow: hidden; }
.proplist { flex: 1; }
.category { height: 23px; background: #343842; display: flex; align-items: center; justify-content: center; gap: 8px; font-weight: 700; color: #c3c6ca; border-radius: 2px; }
.rows { display: flex; flex-direction: column; gap: 4px; }
.prop { display: flex; height: 29px; color: #babdc1; }
.prop.check { height: 28px; }
.plabel { width: 127px; flex: none; padding: 0 3px 1px 8px; display: flex; align-items: center; justify-content: space-between; color: #83878d; white-space: nowrap; }
.prop.on .plabel { background: #2a455e; }
.nested .plabel { width: 134px; padding-left: 21px; }
.plabel .ic { margin-left: -8px; }
.pfield { flex: 1; min-width: 0; background: #10161d; position: relative; display: flex; align-items: center; padding: 0 0 1px 17px; gap: 7px; }
.vec .pfield { padding: 0 0 1px; gap: 7px; }
.vec .val { margin-left: -3px; }
.vec b { width: 21px; align-self: stretch; background: #070a0e; font-weight: 400; display: flex; align-items: center; justify-content: center; color: #6b4f49; }
.vec b.y { color: #4d7a62; }
.check .pfield, .select .pfield { padding-left: 6px; gap: 9px; }
.check input { width: 15px; height: 15px; background: #32373d; border-radius: 2px; }
.check input:checked { background: #6ab0ee url("data:image/svg+xml,%3Csvg xmlns='http://www.w3.org/2000/svg' viewBox='0 0 15 15'%3E%3Cpath d='M3 8l3 3 6-7' fill='none' stroke='white' stroke-width='2.4'/%3E%3C/svg%3E"); }
.check input:checked + .state { color: #5794c4; }
.select select { flex: 1; width: 0; }
.chev { width: 14px; height: 14px; margin-right: 4px; }
.unit { color: #4b5056; }
.spin { position: absolute; right: 7px; }
.slider { position: absolute; left: 6px; right: 10px; bottom: 1px; width: auto; height: 5px; background: linear-gradient(#7c8086, #7c8086) 0 50% / var(--p) 2px no-repeat, linear-gradient(#34393f, #34393f) 0 50% / 100% 2px no-repeat; }
.slider::-webkit-slider-thumb { appearance: none; width: 5px; height: 5px; background: #d5d8dc; }
h3 { height: 22px; background: #1a212c; display: flex; align-items: center; gap: 2px; padding-left: 3px; font-weight: 700; color: #c3c6ca; }
.scroll { width: 6px; flex: none; padding-top: 5px; background: #1a212a; }
.scroll i { display: block; height: 379px; background: #4f545c; border-radius: 3px; }

.videotitle { position: absolute; top: 8px; left: 0; right: 0; text-align: center; font: 400 18px/24px Inter, sans-serif; color: #fff; text-shadow: 0 1px 2px #555; }
.mark { position: absolute; border: 8px solid #f00; border-radius: 4px; }
.canvasmark { left: 386px; top: 355px; width: 510px; height: 274px; }
.zoommark { right: 73px; top: 370px; width: 222px; height: 116px; }
.sizebadge { position: absolute; z-index: 1; left: 4px; top: 4px; height: 36px; padding: 0 5px 0 4px; background: #f5f5f5; color: #1d1d1d; font: 26px/36px Inter, sans-serif; }
.tip { position: absolute; left: 11px; top: 35px; width: 65px; height: 42px; border-radius: 6px; background: #22272b; color: #e3e3e3; font: 18px/42px "Noto Sans CJK SC", sans-serif; text-align: center; }
.shots { position: absolute; right: 25px; top: 417px; height: 300px; display: flex; flex-direction: column; justify-content: space-between; }
.shots button { width: 42px; height: 42px; border-radius: 50%; background: rgba(47, 59, 67, .93); color: #fff; font-size: 14px; }
.shots svg { width: 24px; height: 24px; }
.subtitle { position: absolute; left: 0; right: 0; top: 895px; text-align: center; font: 43px/56px "Liberation Sans", sans-serif; color: #fff; -webkit-text-stroke: 7px #000; paint-order: stroke fill; }

.controls { height: 70px; flex: none; background: linear-gradient(90deg, #212527, #232729 25%, #282c35 50%, #262a31 75%, #232628); position: relative; z-index: 2; }
.seek { display: block; width: 100%; height: 6px; background: linear-gradient(90deg, #ffbd22 var(--p), #4c4f53 var(--p)); }
.seek::-webkit-slider-thumb { appearance: none; width: 22px; height: 22px; border-radius: 50%; background: #fff; }
.row { height: 58px; display: flex; align-items: center; position: relative; padding: 0 28px 0 27px; }
.controls svg { fill: #c6c8cc; display: block; }
.transport { display: flex; gap: 40px; }
.transport svg { width: 26px; height: 34px; }
.mute { margin-left: 41px; }
.mute svg { width: 26px; height: 26px; }
.volume { width: 84px; height: 6px; margin-left: 12px; border-radius: 3px; background: linear-gradient(90deg, #ffbd22 80%, #4c4f53 80%); }
.volume::-webkit-slider-thumb { appearance: none; width: 22px; height: 22px; border-radius: 50%; background: #fff; }
.time { position: absolute; left: 0; right: 0; padding-top: 4px; text-align: center; pointer-events: none; font: 16px/20px "DejaVu Sans Mono", monospace; color: #d5d7da; }
.extras { margin-left: auto; display: flex; align-items: center; gap: 38px; }
.extras svg { width: 28px; height: 24px; }
.rate { font: 18px/24px Inter, sans-serif; color: #f0f0f0; margin-right: 6px; }
</style>
